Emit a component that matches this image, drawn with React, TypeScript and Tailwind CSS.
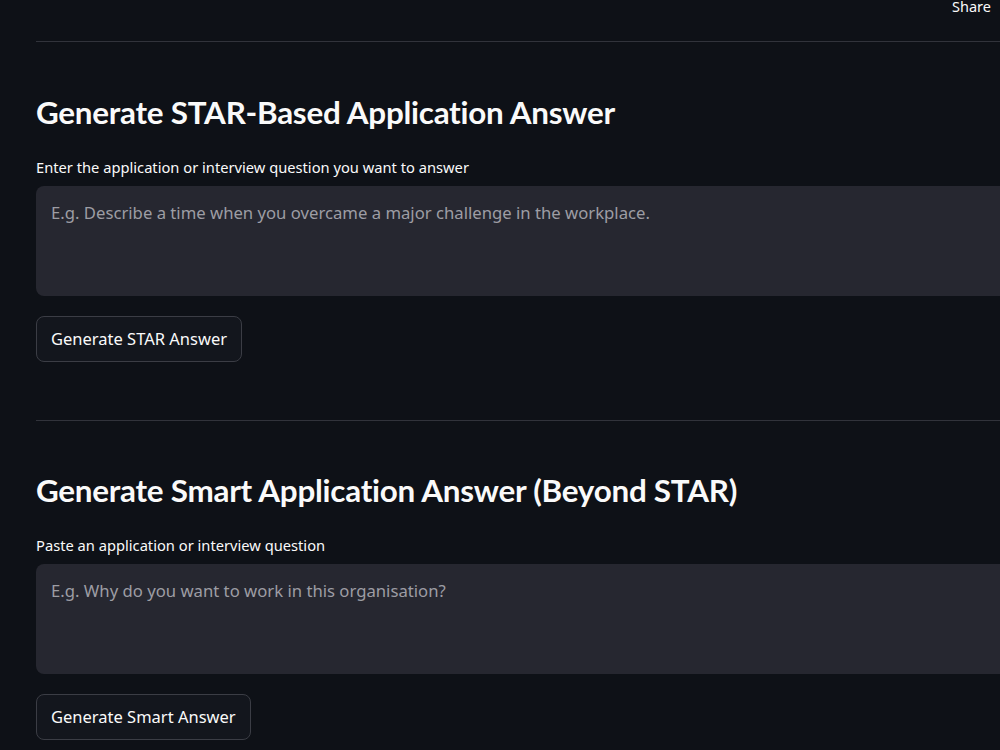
const body = { fontFamily: "'Noto Sans', 'Open Sans', sans-serif" };
const head = { fontFamily: "Lato, 'Noto Sans', sans-serif" };

function Block({ title, label, placeholder, action, first }: { title: string; label: string; placeholder: string; action: string; first?: boolean }) {
  return (
    <section className={first ? "border-t border-[#31333b] pt-[50px]" : "mt-[58px] border-t border-[#31333b] pt-[49px]"}>
      <h2 className="text-[31.4px] font-bold leading-[40px] tracking-[-0.25px]" style={head}>{title}</h2>
      <label className="mt-[25px] block text-[14.7px] leading-[20px]">{label}</label>
      <div className="mt-[9px] h-[110px] rounded-[8px] bg-[#262730] px-[15px] pt-[15px] text-[16.7px] leading-[24px] text-[#9d9da4]">
        {placeholder}
      </div>
      <button className="mt-[20px] h-[46px] rounded-[8px] border border-[#3b3d45] bg-[#13161d] px-[14px] text-[16.5px] text-[#fafafa]">
        {action}
      </button>
    </section>
  );
}

export default function App() {
  return (
    <div className="w-[1000px] h-[750px] overflow-hidden bg-[#0e1117] text-[#fafafa]" style={body}>
      <div className="flex h-[41px] items-start justify-end pr-[9px]">
        <span className="text-[14.5px] leading-[13px] text-[#fafafa]">Share</span>
      </div>
      <div className="w-[1100px] pl-[36px]">
        <Block
          first
          title="Generate STAR-Based Application Answer"
          label="Enter the application or interview question you want to answer"
          placeholder="E.g. Describe a time when you overcame a major challenge in the workplace."
          action="Generate STAR Answer"
        />
        <Block
          title="Generate Smart Application Answer (Beyond STAR)"
          label="Paste an application or interview question"
          placeholder="E.g. Why do you want to work in this organisation?"
          action="Generate Smart Answer"
        />
      </div>
    </div>
  );
}
